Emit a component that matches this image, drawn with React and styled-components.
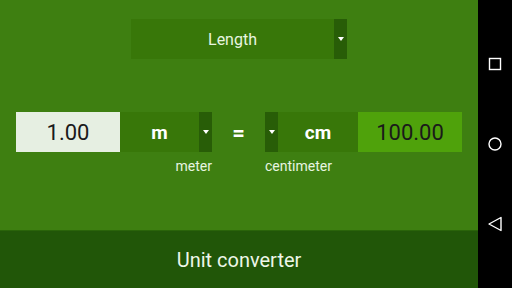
import React from "react";
import styled, { createGlobalStyle } from "styled-components";

const GlobalStyle = createGlobalStyle`
  html, body {
    margin: 0;
    padding: 0;
    background: #000;
  }
  body {
    font-family: Roboto, "Noto Sans", sans-serif;
  }
`;

const Screen = styled.div`
  display: flex;
  width: 512px;
  height: 288px;
  overflow: hidden;
`;

const Content = styled.div`
  flex: 1;
  display: flex;
  flex-direction: column;
  background: #3e7f11;
`;

const Main = styled.div`
  flex: 1;
  display: flex;
  flex-direction: column;
  align-items: center;
  padding-top: 19px;
`;

const Spinner = styled.div`
  display: flex;
  width: ${(p) => p.width}px;
  height: 40px;
  background: #387709;
  flex-direction: ${(p) => (p.arrowLeft ? "row-reverse" : "row")};
`;

const SpinnerLabel = styled.div`
  flex: 1;
  display: flex;
  align-items: center;
  justify-content: center;
  color: ${(p) => (p.bold ? "#ffffff" : "#e8f5e0")};
  font-size: ${(p) => (p.bold ? 19 : 16)}px;
  font-weight: ${(p) => (p.bold ? 700 : 400)};
`;

const Arrow = styled.div`
  width: 13px;
  display: flex;
  align-items: center;
  justify-content: center;
  background: #285d07;

  &::after {
    content: "";
    border-left: 3px solid transparent;
    border-right: 3px solid transparent;
    border-top: 4px solid #ffffff;
  }
`;

const Row = styled.div`
  display: flex;
  align-items: flex-start;
  margin-top: 53px;
  align-self: stretch;
  padding-left: 16px;
`;

const ValueBox = styled.div`
  width: 104px;
  height: 40px;
  display: flex;
  align-items: center;
  justify-content: center;
  font-size: 22px;
  color: #1a1a1a;
  background: ${(p) => (p.result ? "#4fa20b" : "#e6efe2")};
`;

const UnitColumn = styled.div`
  display: flex;
  flex-direction: column;
  align-items: ${(p) => (p.right ? "flex-end" : "flex-start")};
`;

const UnitName = styled.div`
  margin-top: 6px;
  font-size: 14px;
  color: #e8f5e0;
`;

const Equals = styled.div`
  width: 53px;
  height: 40px;
  display: flex;
  align-items: center;
  justify-content: center;
  color: #ffffff;
  font-size: 22px;
  font-weight: 700;
`;

const Footer = styled.div`
  height: 58px;
  display: flex;
  align-items: center;
  justify-content: center;
  background: #215608;
  border-top: 1px solid #2a640a;
  color: #eef7e8;
  font-size: 20px;
  box-sizing: border-box;
`;

const NavBar = styled.div`
  width: 34px;
  background: #000;
  display: flex;
  flex-direction: column;
  align-items: center;
  justify-content: center;
  gap: 64px;
`;

const NavIcon = styled.svg`
  width: 16px;
  height: 16px;
  display: block;
`;

export default function App() {
  return (
    <>
      <GlobalStyle />
      <Screen>
        <Content>
          <Main>
            <Spinner width={216}>
              <SpinnerLabel>Length</SpinnerLabel>
              <Arrow />
            </Spinner>
            <Row>
              <ValueBox>1.00</ValueBox>
              <UnitColumn right>
                <Spinner width={92}>
                  <SpinnerLabel bold>m</SpinnerLabel>
                  <Arrow />
                </Spinner>
                <UnitName>meter</UnitName>
              </UnitColumn>
              <Equals>=</Equals>
              <UnitColumn>
                <Spinner width={93} arrowLeft>
                  <SpinnerLabel bold>cm</SpinnerLabel>
                  <Arrow />
                </Spinner>
                <UnitName>centimeter</UnitName>
              </UnitColumn>
              <ValueBox result>100.00</ValueBox>
            </Row>
          </Main>
          <Footer>Unit converter</Footer>
        </Content>
        <NavBar>
          <NavIcon viewBox="0 0 16 16">
            <rect x="2.5" y="2.5" width="11" height="11" fill="none" stroke="#fff" strokeWidth="1.4" />
          </NavIcon>
          <NavIcon viewBox="0 0 16 16">
            <circle cx="8" cy="8" r="6" fill="none" stroke="#fff" strokeWidth="1.4" />
          </NavIcon>
          <NavIcon viewBox="0 0 16 16">
            <path d="M14 1.5 L2 8 L14 14.5 Z" fill="none" stroke="#fff" strokeWidth="1.4" strokeLinejoin="round" />
          </NavIcon>
        </NavBar>
      </Screen>
    </>
  );
}
